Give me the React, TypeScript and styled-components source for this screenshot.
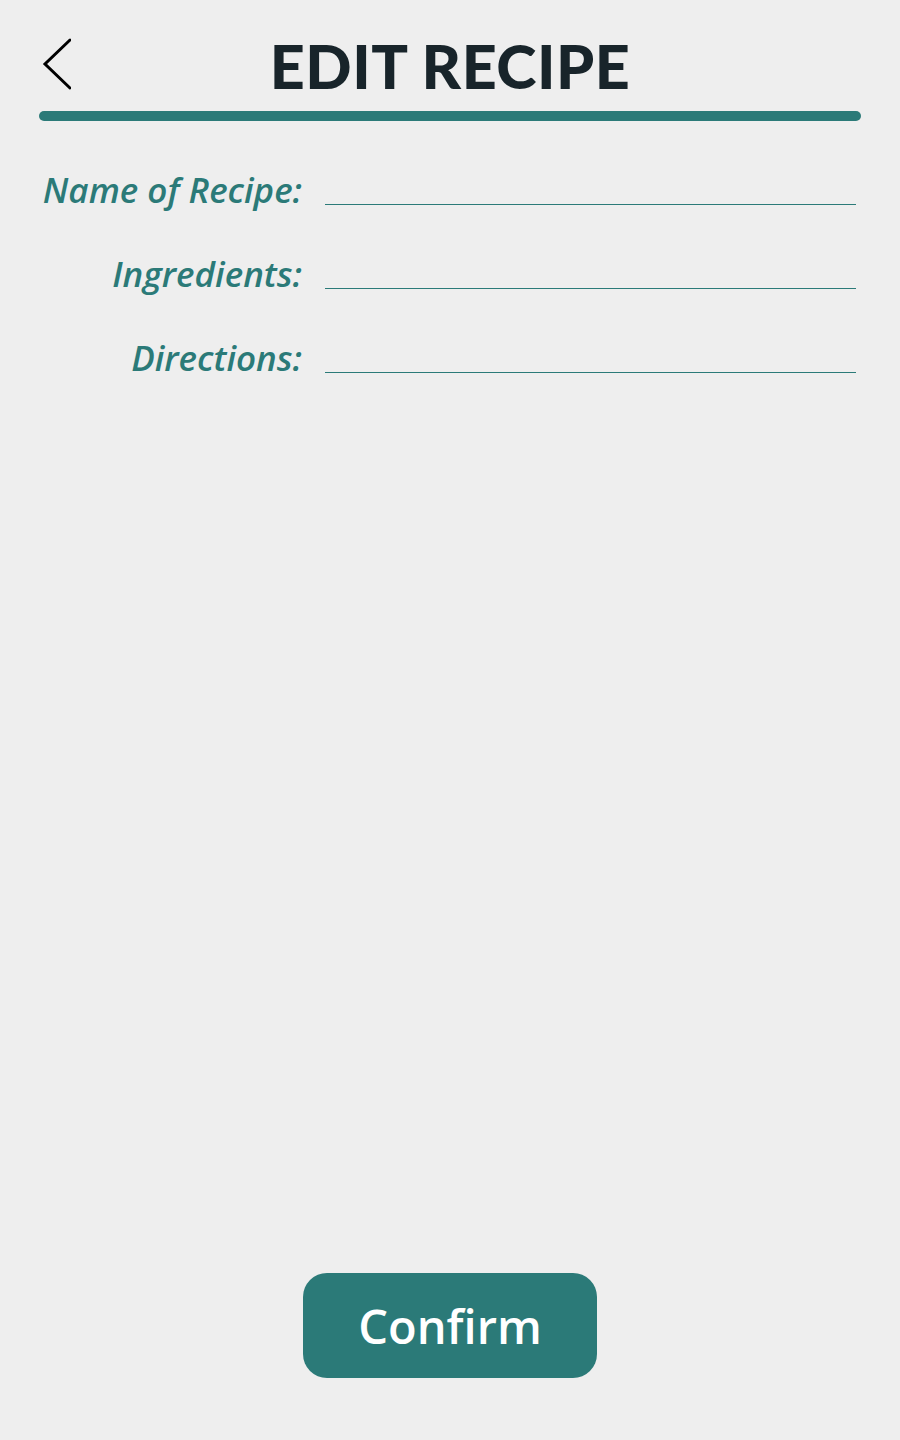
import React from "react";
import styled, { createGlobalStyle } from "styled-components";

const Global = createGlobalStyle`
  html, body { margin: 0; padding: 0; background: #eeeeee; }
  #root { min-height: 100vh; }
`;

const Page = styled.div`
  min-height: 100vh;
  box-sizing: border-box;
  display: flex;
  flex-direction: column;
  padding: 38px 39px 62px 39px;
  background: #eeeeee;
`;

const Header = styled.header`
  position: relative;
  height: 62px;
  display: flex;
  align-items: center;
  justify-content: center;
`;

const BackButton = styled.button`
  position: absolute;
  left: 2px;
  top: 0;
  width: 30px;
  height: 52px;
  padding: 0;
  border: none;
  background: transparent;
  cursor: pointer;
  display: flex;
`;

const Title = styled.h1`
  margin: 0 0 6px 0;
  font-family: "Lato", "DejaVu Sans", sans-serif;
  font-weight: 900;
  font-size: 61px;
  line-height: 62px;
  letter-spacing: 0.5px;
  color: #18242a;
`;

const Divider = styled.div`
  height: 10px;
  border-radius: 5px;
  background: #2b7a78;
  margin-top: 11px;
`;

const Form = styled.div`
  display: grid;
  grid-template-columns: 263px 1fr;
  column-gap: 23px;
  row-gap: 34px;
  margin-top: 44px;
  padding-right: 5px;
`;

const Label = styled.label`
  font-family: "Open Sans", "Noto Sans", sans-serif;
  font-style: italic;
  font-weight: 600;
  font-size: 35px;
  line-height: 50px;
  height: 50px;
  color: #2b7a78;
  text-align: right;
  white-space: nowrap;
`;

const Field = styled.input`
  align-self: start;
  height: 40px;
  box-sizing: border-box;
  border: none;
  border-bottom: 1px solid #2b7a78;
  border-radius: 0;
  background: transparent;
  outline: none;
  padding: 0 4px;
  font-family: "Open Sans", sans-serif;
  font-size: 22px;
  color: #18242a;
`;

const Spacer = styled.div`
  flex: 1;
`;

const Confirm = styled.button`
  align-self: center;
  width: 294px;
  height: 105px;
  border: none;
  border-radius: 24px;
  background: #2b7a78;
  color: #ffffff;
  font-family: "Open Sans", "Noto Sans", sans-serif;
  font-weight: 600;
  font-size: 47px;
  cursor: pointer;
`;

const fields = ["Name of Recipe:", "Ingredients:", "Directions:"];

export default function App() {
  return (
    <>
      <Global />
      <Page>
        <Header>
          <BackButton aria-label="Back">
            <svg width="30" height="52" viewBox="0 0 30 52">
              <polyline
                points="29,2 4,26 29,50"
                fill="none"
                stroke="#000"
                strokeWidth="3"
                strokeLinecap="round"
                strokeLinejoin="miter"
              />
            </svg>
          </BackButton>
          <Title>EDIT RECIPE</Title>
        </Header>
        <Divider />
        <Form>
          {fields.map((f) => (
            <React.Fragment key={f}>
              <Label>{f}</Label>
              <Field aria-label={f} />
            </React.Fragment>
          ))}
        </Form>
        <Spacer />
        <Confirm>Confirm</Confirm>
      </Page>
    </>
  );
}
